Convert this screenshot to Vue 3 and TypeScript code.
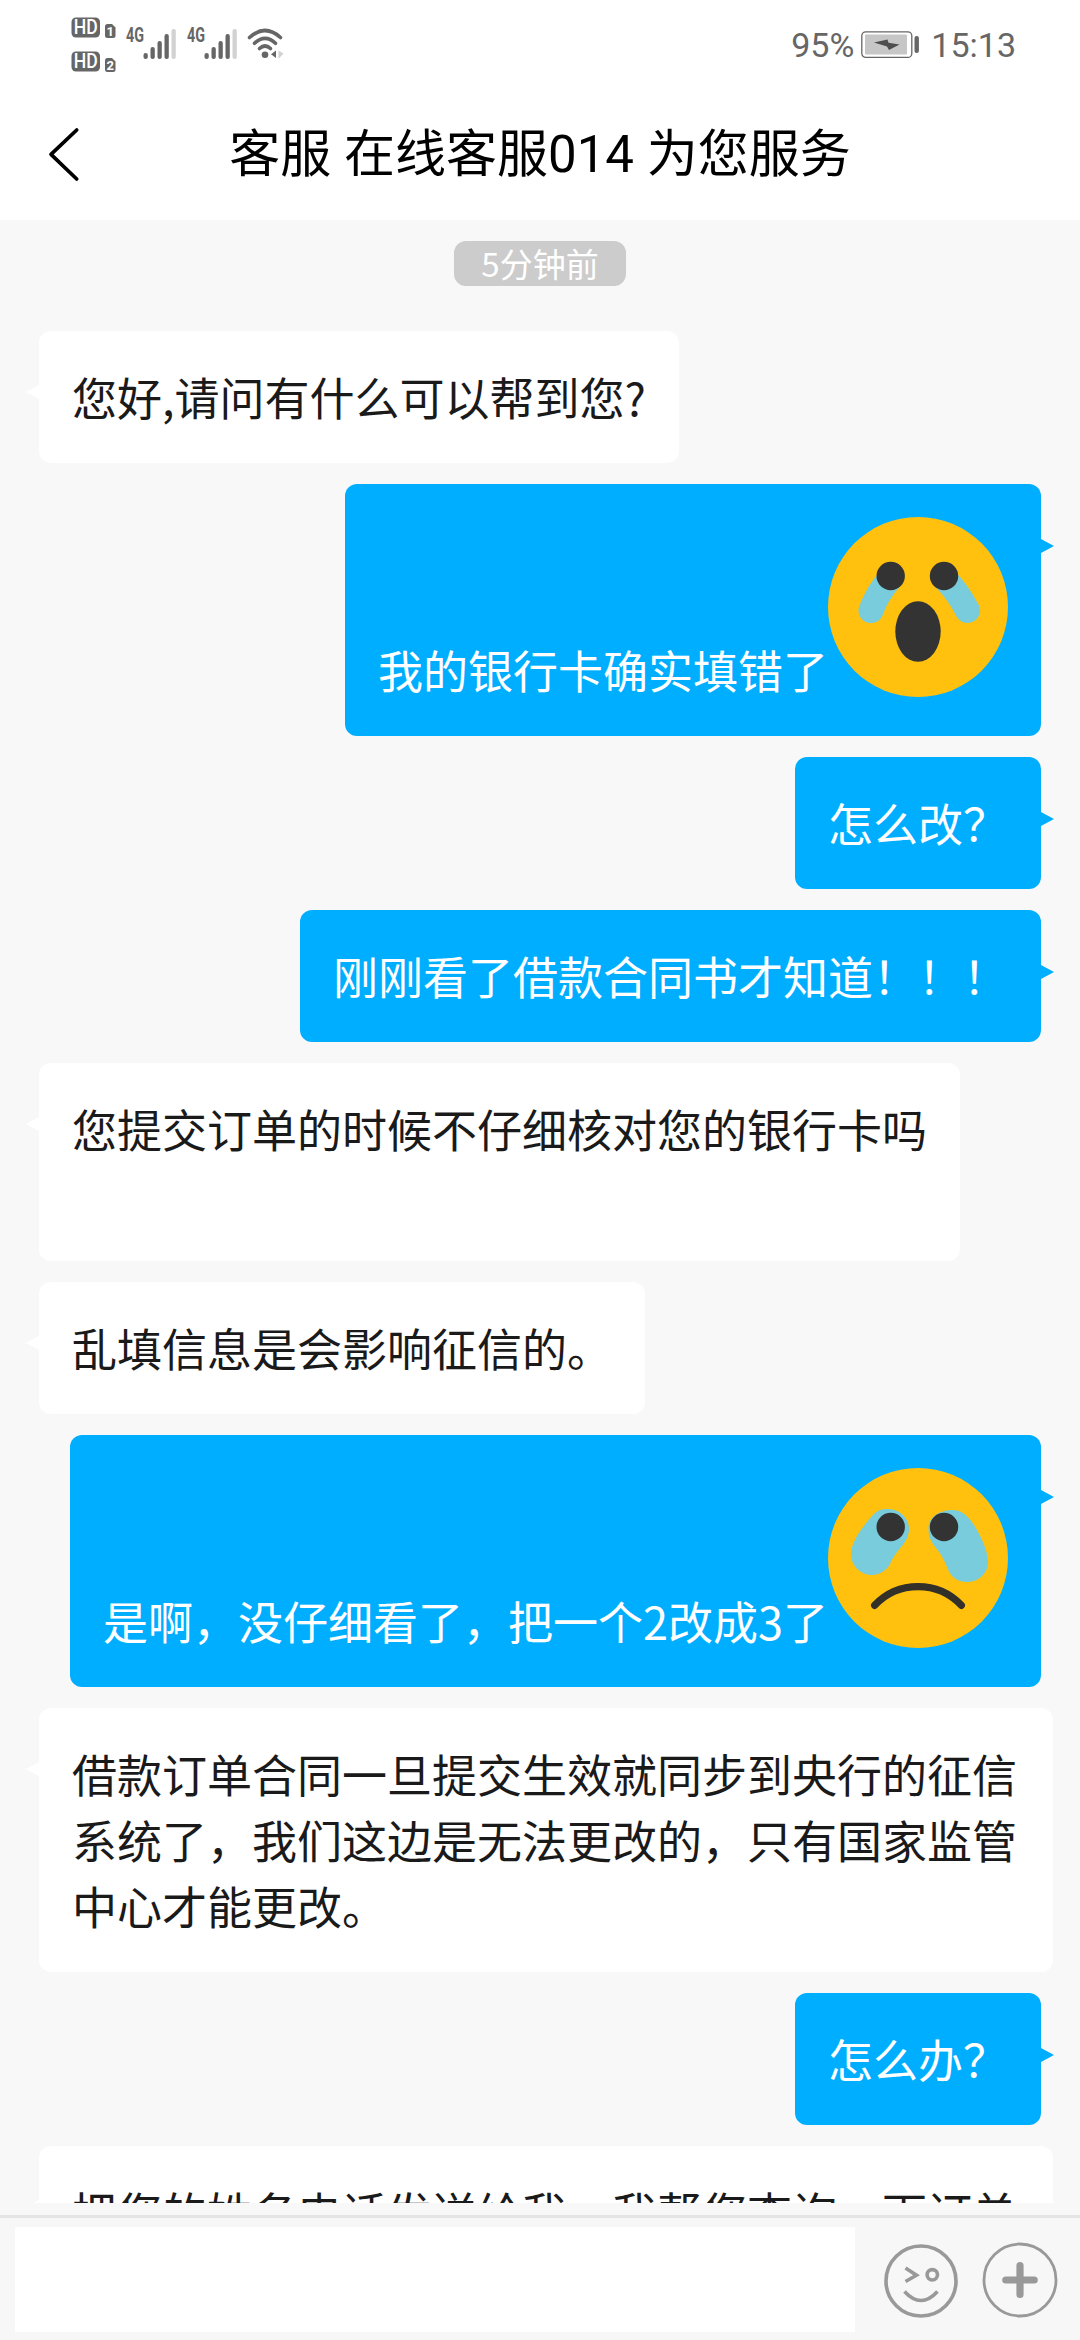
<script setup lang="ts">
interface Message {
  id: number
  from: 'agent' | 'user'
  text: string
  emoji?: 'scream' | 'cry'
  wide?: boolean
}

const messages: Message[] = [
  { id: 1, from: 'agent', text: '您好,请问有什么可以帮到您?' },
  { id: 2, from: 'user', text: '我的银行卡确实填错了', emoji: 'scream' },
  { id: 3, from: 'user', text: '怎么改？' },
  { id: 4, from: 'user', text: '刚刚看了借款合同书才知道！！！' },
  { id: 5, from: 'agent', text: '您提交订单的时候不仔细核对您的银行卡吗\n\u00a0' },
  { id: 6, from: 'agent', text: '乱填信息是会影响征信的。' },
  { id: 7, from: 'user', text: '是啊，没仔细看了，把一个2改成3了', emoji: 'cry' },
  {
    id: 8,
    from: 'agent',
    text: '借款订单合同一旦提交生效就同步到央行的征信系统了，我们这边是无法更改的，只有国家监管中心才能更改。',
    wide: true,
  },
  { id: 9, from: 'user', text: '怎么办？' },
  { id: 10, from: 'agent', text: '把您的姓名电话发送给我，我帮您查询一下订单', wide: true },
]

const bars = [
  { x: 0, h: 6 },
  { x: 7, h: 12 },
  { x: 14, h: 18 },
  { x: 21, h: 25 },
]
</script>

<template>
  <div class="screen">
    <div class="status">
      <div class="status-left">
        <svg class="hd" width="46" height="56" viewBox="0 0 46 56">
          <g v-for="n in 2" :key="n" :transform="`translate(0 ${(n - 1) * 34})`">
            <rect x="0.5" y="0.5" width="28.5" height="20" rx="4.5" fill="#666" />
            <text x="14.8" y="16.8" text-anchor="middle" class="hd-text" textLength="24" lengthAdjust="spacingAndGlyphs">HD</text>
            <path d="M36.5 7H41L44.5 10.5V18.5Q44.5 21 42 21H36.5Q34 21 34 18.5V9.5Q34 7 36.5 7Z" fill="#666" />
            <text x="39.3" y="18.6" text-anchor="middle" class="hd-num">{{ n }}</text>
          </g>
        </svg>
        <svg v-for="n in 2" :key="n" class="signal" width="52" height="38" viewBox="0 -4 52 38">
          <text x="0" y="16" class="net" textLength="18" lengthAdjust="spacingAndGlyphs">4G</text>
          <rect v-for="b in bars" :key="b.x" :x="17.5 + b.x" :y="33 - b.h" width="4.3" :height="b.h" rx="2.1" fill="#666" />
          <rect x="45.5" y="3" width="4.3" height="30" rx="2" fill="#d2d2d2" />
        </svg>
        <svg class="wifi" width="40" height="34" viewBox="0 0 40 34">
          <g fill="none" stroke="#666" stroke-width="3.6" stroke-linecap="round">
            <path d="M3.5 11.5Q19 -2.5 34.5 11.5" />
            <path d="M8.5 17.3Q19 7.5 29.5 17.3" />
            <path d="M13.5 22.5Q19 17.5 24.5 22.5" />
          </g>
          <circle cx="19" cy="28.8" r="3.3" fill="#666" />
          <path d="M30 24.5V32L25 28.3Z" fill="#666" />
          <path d="M32.5 24.5L37.5 27.5L32.5 33Z" fill="#d2d2d2" />
        </svg>
      </div>
      <div class="status-right">
        <span class="pct">95%</span>
        <svg class="battery" width="60" height="30" viewBox="0 0 60 30">
          <rect x="0.8" y="1.8" width="50" height="25.6" rx="4" fill="#fff" stroke="#666" stroke-width="1.3" />
          <rect x="4" y="4.5" width="42" height="20" rx="1" fill="#c6c6c6" />
          <path d="M13 12.5L26.5 9.5L27.5 12.8L38.5 14.5L28 20L26 16.5Z" fill="#4d4d4d" />
          <rect x="53.5" y="6" width="4.4" height="17" rx="2" fill="#666" />
        </svg>
        <span class="clock">15:13</span>
      </div>
    </div>

    <header class="header">
      <svg class="back" width="36" height="56" viewBox="0 0 36 56">
        <path d="M29.7 3L4 27.3L29.7 52" fill="none" stroke="#000" stroke-width="3.7" stroke-linecap="round" stroke-linejoin="round" />
      </svg>
      <h1>客服 在线客服014 为您服务</h1>
    </header>

    <main class="chat">
      <div class="time">5分钟前</div>
      <div v-for="m in messages" :key="m.id" class="bubble" :class="[m.from, { wide: m.wide, rich: m.emoji }]">
        <span class="text">{{ m.text }}</span>
        <svg v-if="m.emoji" class="emoji" width="180" height="180" viewBox="0 0 180 180">
          <circle cx="90" cy="90" r="90" fill="#ffc10e" />
          <template v-if="m.emoji === 'scream'">
            <g fill="none" stroke="#78ccdc" stroke-width="25" stroke-linecap="round">
              <path d="M62 62Q50 75 43 93.5" />
              <path d="M117 62Q130 75 139.5 93.5" />
            </g>
            <ellipse cx="90" cy="114.5" rx="22.7" ry="30.3" fill="#333" />
          </template>
          <template v-else>
            <path fill="#78ccdc" d="M59 41C72 41 81 50 81 61C81 75 69 80 62 96C59 102 52 107 44 107C32 107 23 97 23 86C23 72 40 52 46 46C50 42 54 41 59 41Z" />
            <path fill="#78ccdc" d="M124 42C134 42 140 48 146 57C153 68 160 83 160 94C160 106 150 114 139 114C129 114 122 108 119 99C114 86 110 83 105 76C101 70 100.5 66 100.5 59C101 49 112 42 124 42Z" />
            <path d="M46.7 137.3A59.7 59.7 0 0 1 133.3 137.3" fill="none" stroke="#333029" stroke-width="7.3" stroke-linecap="round" />
          </template>
          <circle cx="62.7" cy="59" r="14.2" fill="#333" />
          <circle cx="116" cy="59" r="14.2" fill="#333" />
        </svg>
      </div>
    </main>

    <footer class="composer">
      <div class="input"></div>
      <svg class="smile" width="76" height="76" viewBox="0 0 76 76" fill="none" stroke="#999" stroke-width="3.6">
        <circle cx="38" cy="38" r="35" />
        <path d="M22.5 25L33.5 32.2L22.5 38.5" />
        <circle cx="49.3" cy="31.8" r="5.2" />
        <path d="M21.5 48.5Q38 66.5 54.5 48.5" />
      </svg>
      <svg class="plus" width="76" height="76" viewBox="0 0 76 76" fill="none" stroke="#999">
        <circle cx="38" cy="38" r="36" stroke-width="2.8" />
        <path d="M38 23.5V52.5M23.8 38H52.2" stroke-width="7.2" stroke-linecap="round" />
      </svg>
    </footer>
  </div>
</template>

<style>
body {
  margin: 0;
  overflow: hidden;
}
</style>

<style scoped>
.screen {
  width: 1080px;
  height: 2340px;
  display: flex;
  flex-direction: column;
  background: #f8f8f8;
  font-family: "Noto Sans CJK SC", sans-serif;
  overflow: hidden;
}
.status {
  height: 90px;
  flex: none;
  display: flex;
  justify-content: space-between;
  background: #fff;
  color: #666;
}
.status-left {
  display: flex;
  align-items: flex-start;
  padding-left: 71px;
}
.hd {
  margin-top: 17px;
}
.signal {
  margin: 22px 0 0 9px;
  overflow: visible;
}
.wifi {
  margin: 26px 0 0 7px;
}
.hd-text {
  font: 500 20px Roboto, sans-serif;
  fill: #fff;
}
.hd-num {
  font: 700 13px Roboto, sans-serif;
  fill: #fff;
}
.net {
  font: 700 19.5px Roboto, sans-serif;
  fill: #666;
}
.status-right {
  display: flex;
  align-items: center;
  padding-right: 64px;
  font: 34px/90px Roboto, sans-serif;
}
.battery {
  margin: 0 10px 0 7px;
}
.header {
  height: 130px;
  flex: none;
  display: grid;
  grid-template-columns: 120px 1fr 120px;
  align-items: center;
  background: #fff;
}
.back {
  margin-left: 47px;
}
h1 {
  margin: 0;
  text-align: center;
  font: 400 51px/72px Roboto, "Noto Sans CJK SC", sans-serif;
  color: #000;
  white-space: nowrap;
}
.chat {
  height: 1983px;
  flex: none;
  box-sizing: border-box;
  padding: 21px 27px 0 39px;
  display: flex;
  flex-direction: column;
  align-items: flex-start;
  gap: 21px;
  overflow: hidden;
}
.time {
  flex: none;
  align-self: center;
  box-sizing: border-box;
  width: 172px;
  height: 45px;
  margin: 0 0 24px -12px;
  border-radius: 12px;
  background: #ccc;
  color: #fff;
  font-size: 33px;
  line-height: 45px;
  text-align: center;
}
.bubble {
  position: relative;
  flex: none;
  box-sizing: border-box;
  padding: 33px;
  border-radius: 12px;
  font-size: 45px;
  line-height: 66px;
  white-space: pre-wrap;
}
.agent {
  background: #fff;
  color: #1a1a1a;
}
.user {
  align-self: flex-end;
  margin-right: 12px;
  background: #00aeff;
  color: #fff;
}
.wide {
  width: 1014px;
}
.rich {
  display: flex;
  align-items: flex-end;
  height: 252px;
}
.emoji {
  flex: none;
  align-self: flex-start;
}
.bubble::before {
  content: "";
  position: absolute;
  top: 55px;
  border: 7px solid transparent;
}
.agent::before {
  top: 54px;
  right: 100%;
  border-left-width: 0;
  border-right: 13px solid #fff;
}
.user::before {
  left: 100%;
  border-right-width: 0;
  border-left: 13px solid #00aeff;
}
.composer {
  flex: none;
  height: 125px;
  box-sizing: border-box;
  margin-top: 12px;
  border-top: 3px solid #e5e5e5;
  padding: 1px 21px 0 15px;
  display: flex;
  align-items: center;
  background: #f7f7f7;
}
.input {
  width: 840px;
  height: 105px;
  background: #fff;
}
.smile {
  margin: 3px 0 0 28px;
}
.plus {
  margin: 1px 0 0 23px;
}
</style>
